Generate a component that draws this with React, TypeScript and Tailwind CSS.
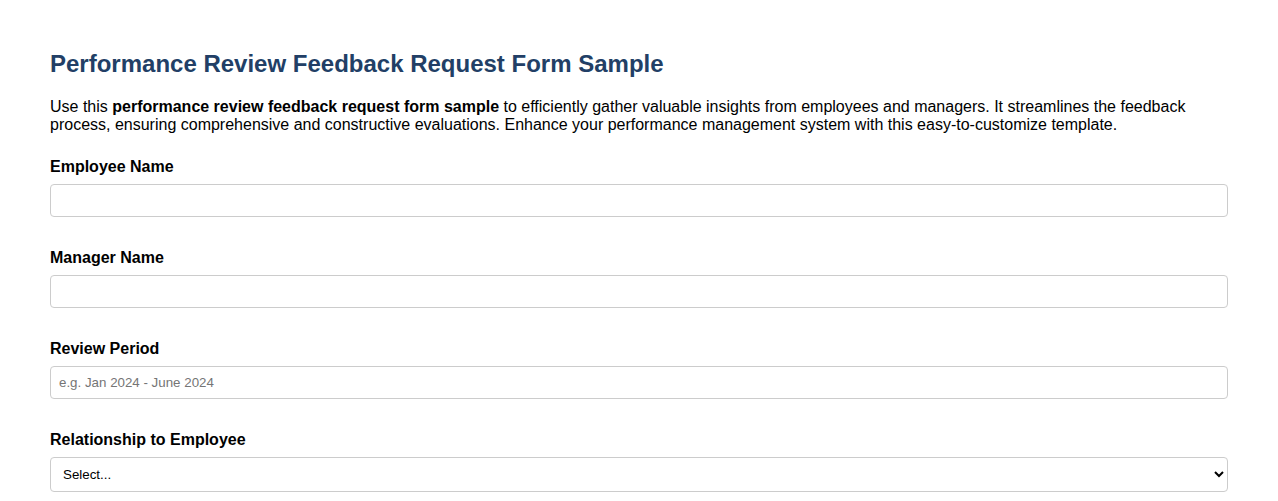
export default function App() {
  const fields = [
    { label: 'Employee Name', placeholder: '' },
    { label: 'Manager Name', placeholder: '' },
    { label: 'Review Period', placeholder: 'e.g. Jan 2024 - June 2024' },
  ]

  return (
    <div className="min-h-screen bg-white px-[50px] pt-[50px] font-['Liberation_Sans',Arial,sans-serif] text-black">
      <h2 className="mb-[20px] text-[24px] font-bold leading-[28px] text-[#223f66]">
        Performance Review Feedback Request Form Sample
      </h2>
      <p className="mb-[23px] text-[16px] leading-[18px]">
        Use this <strong>performance review feedback request form sample</strong> to efficiently gather valuable insights
        from employees and managers. It streamlines the feedback process, ensuring comprehensive and constructive
        evaluations. Enhance your performance management system with this easy-to-customize template.
      </p>

      <form className="flex flex-col">
        {fields.map((f) => (
          <div key={f.label} className="mb-[31px] flex flex-col">
            <label className="mb-[8px] mt-[1px] text-[16px] font-bold leading-[18px]">{f.label}</label>
            <input
              type="text"
              placeholder={f.placeholder}
              className="h-[33px] w-full rounded-[4px] border border-[#cccccc] px-[8px] text-[13.33px] outline-none placeholder:text-[#757575]"
            />
          </div>
        ))}
        <div className="flex flex-col">
          <label className="mb-[8px] mt-[1px] text-[16px] font-bold leading-[18px]">Relationship to Employee</label>
          <select
            defaultValue=""
            className="h-[35px] w-full appearance-auto rounded-[4px] border border-[#cccccc] bg-white px-[8px] text-[13.33px] text-black outline-none"
          >
            <option value="">Select...</option>
            <option>Manager</option>
            <option>Peer</option>
            <option>Direct Report</option>
            <option>Self</option>
          </select>
        </div>
      </form>
    </div>
  )
}
